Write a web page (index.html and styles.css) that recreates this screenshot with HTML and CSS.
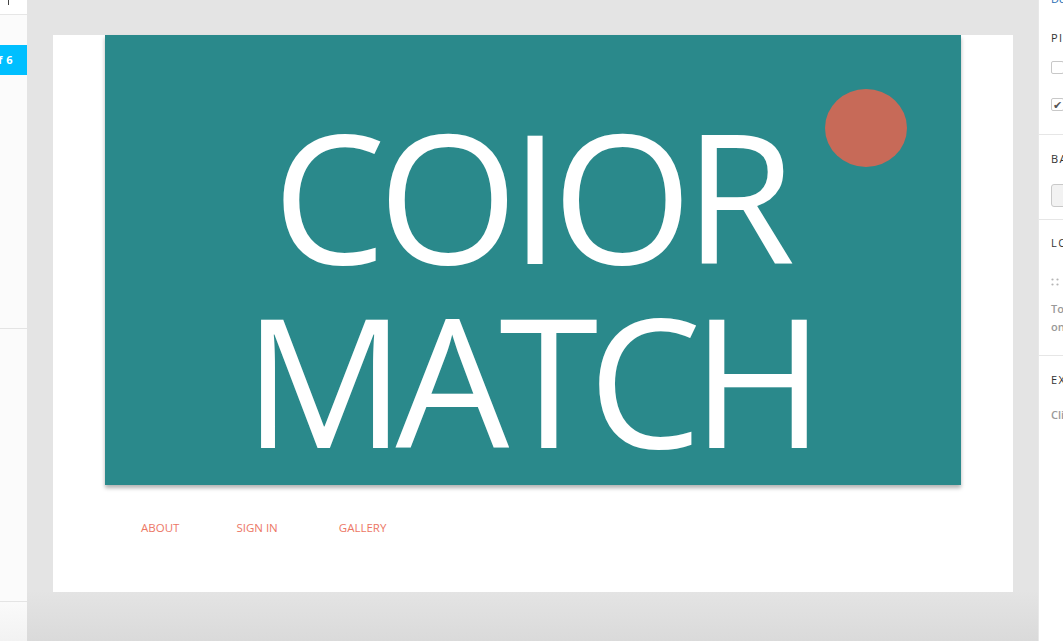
FILE: index.html
```html
<!DOCTYPE html>
<html lang="en">
<head>
<meta charset="utf-8">
<title>Color Match</title>
<link rel="stylesheet" href="styles.css">
</head>
<body>
<div class="app">
  <aside class="left">
    <div class="left-top"><span class="caret"></span></div>
    <div class="left-pages">
      <div class="page-badge">Page 1 of 6</div>
    </div>
    <div class="left-layers"></div>
    <div class="left-foot"></div>
  </aside>

  <main class="canvas">
    <div class="page">
      <div class="hero">
        <div class="hero-line">COIOR</div>
        <div class="hero-line">MATCH</div>
        <span class="dot"></span>
      </div>
      <nav class="nav">
        <a class="nav-item">ABOUT</a>
        <a class="nav-item">SIGN IN</a>
        <a class="nav-item nav-last">GALLERY</a>
      </nav>
    </div>
  </main>

  <aside class="right">
    <div class="right-head">Design</div>
    <section class="sec sec-pin">
      <div class="sec-title">PIN OPTIONS</div>
      <label class="check"><span class="box"></span>Show grid</label>
      <label class="check"><span class="box on">&#10004;</span>Snap</label>
    </section>
    <section class="sec sec-bg">
      <div class="sec-title">BACKGROUND</div>
      <div class="btn">Choose</div>
    </section>
    <section class="sec sec-logo">
      <div class="sec-title">LOGO</div>
      <div class="grip">
        <svg width="8" height="8" viewBox="0 0 8 8"><circle cx="1.5" cy="1.5" r="1.1" fill="#b5b5b5"/><circle cx="6.5" cy="1.5" r="1.1" fill="#b5b5b5"/><circle cx="1.5" cy="6.5" r="1.1" fill="#b5b5b5"/><circle cx="6.5" cy="6.5" r="1.1" fill="#b5b5b5"/></svg>
      </div>
      <p class="hint">To reorder, drag<br>one of the logos</p>
    </section>
    <section class="sec sec-ex">
      <div class="sec-title">EXPORT</div>
      <p class="hint">Click to export</p>
    </section>
  </aside>
</div>
</body>
</html>
```

FILE: styles.css
```css
* { box-sizing: border-box; }
html, body { margin: 0; padding: 0; }
body {
  width: 1063px;
  height: 641px;
  overflow: hidden;
  font-family: "Open Sans", "Noto Sans", sans-serif;
  background: #e4e4e4;
}
.app {
  display: flex;
  width: 1063px;
  height: 641px;
}

/* left panel */
.left {
  width: 27px;
  flex: none;
  display: flex;
  flex-direction: column;
  background: #fbfbfb;
  overflow: hidden;
}
.left-top {
  height: 15px;
  background: #fff;
  border-bottom: 1px solid #e6e6e6;
}
.caret {
  display: block;
  width: 1px;
  height: 5px;
  margin-left: 8px;
  background: #444;
}
.left-pages {
  height: 314px;
  padding-top: 30px;
  border-bottom: 1px solid #e4e4e4;
}
.page-badge {
  height: 30px;
  background: #00bfff;
  color: #fff;
  font-weight: 700;
  font-size: 11px;
  line-height: 30px;
  white-space: nowrap;
  direction: rtl;
  padding-right: 14px;
  letter-spacing: 0.5px;
}
.left-layers {
  height: 273px;
  border-bottom: 1px solid #e4e4e4;
}
.left-foot {
  flex: 1;
  background: linear-gradient(#fafafa, #f2f2f2);
}

/* canvas */
.canvas {
  flex: 1;
  padding: 35px 0 0 26px;
  background: linear-gradient(#e4e4e4 0, #e4e4e4 590px, #dadada 641px);
}
.page {
  width: 960px;
  height: 557px;
  background: #fff;
  padding-left: 52px;
}
.hero {
  position: relative;
  width: 856px;
  height: 450px;
  background: #2a898b;
  box-shadow: 0 3px 4px rgba(0, 0, 0, 0.3);
  padding-top: 68px;
  color: #fff;
  text-align: center;
}
.hero-line {
  font-size: 180px;
  line-height: 184px;
  font-weight: 400;
  white-space: nowrap;
  letter-spacing: -8px;
  margin-left: -6px;
}
.hero-line + .hero-line {
  letter-spacing: -10px;
  margin-left: -8px;
}
.dot {
  position: absolute;
  left: 720px;
  top: 54px;
  width: 82px;
  height: 78px;
  border-radius: 50%;
  background: #c76a58;
}
.nav {
  display: flex;
  padding: 37px 0 0 36px;
  gap: 57px;
}
.nav-item {
  font-size: 11.5px;
  line-height: 12px;
  color: #ec7765;
}
.nav-last { margin-left: 4px; }

/* right panel */
.right {
  width: 25px;
  flex: none;
  background: #fff;
  border-left: 1px solid #e8e8e8;
  overflow: hidden;
  white-space: nowrap;
}
.right-head {
  line-height: 10px;
  font-size: 11px;
  color: #2a6fb5;
  padding-left: 12px;
  margin-top: -6px;
  height: 6px;
}
.sec {
  padding-left: 12px;
  border-bottom: 1px solid #e6e6e6;
}
.sec-title {
  font-size: 11px;
  line-height: 12px;
  letter-spacing: 1.5px;
  color: #333;
}
.sec-pin { height: 135px; padding-top: 32px; }
.sec-bg { height: 85px; padding-top: 18px; }
.sec-logo { height: 136px; padding-top: 17px; }
.sec-ex { padding-top: 18px; height: 300px; border-bottom: 0; }

.check {
  display: flex;
  align-items: center;
  gap: 6px;
  font-size: 11px;
  color: #555;
  height: 13px;
}
.sec-pin .check:first-of-type { margin-top: 17px; }
.sec-pin .check + .check { margin-top: 24px; }
.box {
  flex: none;
  width: 13px;
  height: 13px;
  border: 1px solid #c8c8c8;
  border-radius: 2px;
  background: #fff;
  font-size: 11px;
  line-height: 11px;
  text-align: center;
  color: #555;
}
.btn {
  margin-top: 19px;
  width: 80px;
  height: 23px;
  border: 1px solid #c9c9c9;
  border-radius: 3px;
  background: #f2f2f2;
  font-size: 11px;
  line-height: 21px;
  padding-left: 10px;
  color: #f2f2f2;
}
.grip {
  margin-top: 29px;
  height: 8px;
  line-height: 0;
}
.hint {
  margin: 14px 0 0;
  font-size: 11px;
  line-height: 18px;
  color: #999;
  font-weight: 600;
}
.sec-ex .hint { margin-top: 20px; }
```
